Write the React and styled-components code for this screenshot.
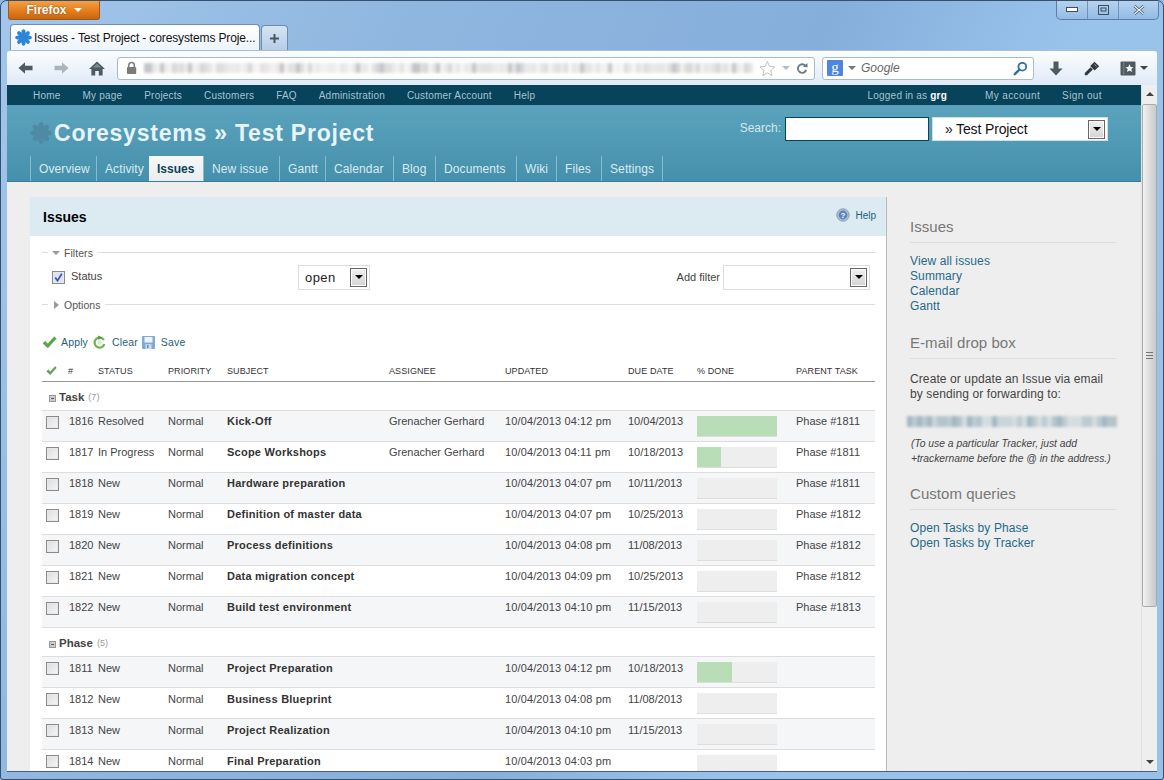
import React from "react";
import styled, { createGlobalStyle } from "styled-components";

const Global = createGlobalStyle`
  html, body { margin: 0; padding: 0; background: #8fb8e3; }
  * { box-sizing: border-box; }
  body { font-family: "Liberation Sans", Arial, sans-serif; overflow: hidden; }
`;

const Window = styled.div`
  width: 1164px; height: 780px; overflow: hidden; display: flex; flex-direction: column;
  border: 1px solid #34506e; border-radius: 7px 7px 3px 3px;
  background: linear-gradient(115deg, #a3c6ea 0%, #8fb6df 28%, #86aedb 55%, #9ac3ec 72%, #98c1ea 100%);
`;
const TitleBar = styled.div`
  height: 19px; flex: none; display: flex; justify-content: space-between; padding: 0 4px 0 7px; margin-top: -1px;
`;
const FirefoxButton = styled.div`
  width: 92px; height: 20px; display: flex; align-items: center; justify-content: center; gap: 7px;
  color: #fff; font-size: 12px; font-weight: bold; border: 1px solid #9c5a1c; border-top: 0; border-radius: 0 0 3px 3px;
  background: linear-gradient(#f5a54a, #e77f1d 55%, #c9650f); text-shadow: 0 0 2px #8a4a10;
`;
const Caret = styled.span`
  width: 0; height: 0; border-left: 4px solid transparent; border-right: 4px solid transparent;
  border-top: 4px solid ${p => p.$color || "#fff"}; display: inline-block;
`;
const CaretUp = styled(Caret)`
  border-top: 0; border-bottom: 4px solid ${p => p.$color || "#fff"};
`;
const WinControls = styled.div`
  display: flex; width: 103px; height: 20px; border: 1px solid #5a7ea6; border-top: 0; border-radius: 0 0 5px 5px;
  background: linear-gradient(#b9d3ee, #93bbe5);
`;
const WinBtn = styled.div`
  flex: ${p => p.$grow || 1}; display: flex; align-items: center; justify-content: center;
  & + & { border-left: 1px solid #6f93bb; }
`;
const TabRow = styled.div`
  height: 31px; flex: none; display: flex; align-items: flex-end; padding: 0 0 0 9px; gap: 1px;
`;
const Tab = styled.div`
  width: 250px; height: 26px; display: flex; align-items: center; gap: 2px; padding: 0 0 0 4px; font-size: 12px; letter-spacing: -.13px; color: #111;
  background: linear-gradient(#fff, #eef4fb); border: 1px solid #6d8cae; border-bottom: 0; border-radius: 4px 4px 0 0; white-space: nowrap;
`;
const NewTab = styled.div`
  width: 27px; height: 25px; display: flex; align-items: center; justify-content: center;
  background: linear-gradient(#d5e4f4, #b6cde6); border: 1px solid #6d8cae; border-bottom: 0; border-radius: 4px 4px 0 0;
`;
const NavShell = styled.div`
  flex: 1; min-height: 0; margin: 0 6px 7px 6px; display: flex; flex-direction: column;
  border-bottom: 1px solid #46607c;
`;
const NavBar = styled.div`
  height: 35px; flex: none; display: flex; align-items: center;
  background: linear-gradient(#fbfdff, #dfeaf6); border-radius: 3px 3px 0 0; border-top: 1px solid #a9bfd6;
`;
const NavIcon = styled.div`
  width: ${p => p.$w || 36}px; display: flex; justify-content: center; align-items: center; flex: none;
`;
const UrlBar = styled.div`
  width: 698px; height: 23px; flex: none; margin: 0 7px 0 1px; display: flex; align-items: center; padding: 0 6px 0 8px;
  background: #fff; border: 1px solid #a9bacb; border-radius: 3px;
`;
const Mosaic = styled.div`
  height: ${p => p.$h}px; width: ${p => p.$w}px; flex: none; filter: blur(1.4px); margin: ${p => p.$m || 0};
`;
const SearchBar = styled.div`
  width: 212px; height: 23px; flex: none; display: flex; align-items: center; padding: 0 5px 0 4px; gap: 5px;
  background: #fff; border: 1px solid #a9bacb; border-radius: 3px;
`;
const GBox = styled.div`
  width: 16px; height: 16px; background: #4d86dc; color: #fff; border-radius: 1px; font: 15px/15px "Liberation Serif", serif; text-align: center;
`;
const GoogleText = styled.span`
  flex: 1; font: italic 12px "Liberation Sans", sans-serif; color: #666; margin-left: 0;
`;
const Body = styled.div`
  flex: 1; min-height: 0; display: flex;
`;
const Page = styled.div`
  flex: 1; min-width: 0; overflow: hidden; background: #eee;
`;
const TopMenu = styled.div`
  height: 21px; display: flex; align-items: center; background: #07435a; padding: 0 39px 0 26px; font-size: 10px; letter-spacing: .2px; color: #a5c3ce;
  border-bottom: 1px solid #5d9db3;
`;
const TopLink = styled.span` margin-right: 22px; `;
const TopRight = styled.div`
  margin-left: auto; display: flex; gap: 22px; letter-spacing: .4px;
  & b { color: #fff; }
`;
const LoggedIn = styled.span` margin-right: 16px; letter-spacing: .2px; `;
const Header = styled.div`
  height: 76px; background: linear-gradient(#5ba3bd, #4590ac); border-bottom: 1px solid #3b7d96; display: flex; flex-direction: column; padding: 0 33px 0 23px;
`;
const HeaderTop = styled.div`
  flex: 1; display: flex; justify-content: space-between; align-items: flex-start; padding-top: 11px;
`;
const Title = styled.h1`
  margin: 1px 0 0; display: flex; align-items: center; gap: 2px; font-size: 23px; line-height: 30px; letter-spacing: .78px; font-weight: bold; color: #e8f4f8; white-space: nowrap;
`;
const QuickSearch = styled.div`
  display: flex; align-items: flex-start; gap: 4px; font-size: 12px; color: #d3e8ef;
`;
const SearchLabel = styled.span` line-height: 22px; `;
const SearchInput = styled.div`
  width: 144px; height: 24px; background: #fff; border: 1px solid #07435a;
`;
const ProjectSelect = styled.div`
  width: 176px; height: 24px; margin-left: -1px; background: #fff; border: 1px solid #cfe0e8; display: flex; align-items: center; justify-content: space-between;
  padding: 0 2px 0 12px; font-size: 14px; letter-spacing: -.15px; color: #111;
`;
const Tabs = styled.div`
  display: flex; height: 25px; flex: none;
`;
const TabItem = styled.div`
  display: flex; align-items: center; width: ${p => p.$w}px; font-size: 12px; letter-spacing: ${p => p.$active ? 0 : ".1px"}; font-weight: ${p => p.$active ? "bold" : "normal"};
  padding-left: ${p => p.$active ? 7 : 8}px; white-space: nowrap;
  color: ${p => p.$active ? "#0c4258" : "#d9ebf1"};
  border-left: 1px solid ${p => p.$active ? "transparent" : "#88bbcd"};
  background: ${p => p.$active ? "linear-gradient(#f6f9fa, #e9eded)" : "transparent"};
`;
const Main = styled.div`
  display: flex; padding: 15px 0 0 23px; height: 700px;
`;
const Content = styled.div`
  width: 857px; flex: none; background: #fff; border-right: 1px solid #bbb;
`;
const ContentHead = styled.div`
  height: 39px; background: #dceaf1; display: flex; align-items: center; justify-content: space-between; padding: 0 10px 0 13px;
`;
const PageTitle = styled.h2`
  margin: 0; font-size: 14px; font-weight: bold; color: #000;
`;
const HelpLink = styled.span`
  display: flex; align-items: center; gap: 5px; font-size: 10px; color: #1f5f7a; margin-top: -3px;
`;
const Inner = styled.div` padding: 0 11px 0 12px; `;
const Legend = styled.div`
  display: flex; align-items: center; gap: 4px; height: 13px; font-size: 10.5px; color: #555; letter-spacing: .05px; margin-top: ${p => p.$mt || 0}px;
  &::before { content: ""; width: 6px; height: 1px; background: #ddd; }
  &::after { content: ""; flex: 1; height: 1px; background: #ddd; }
`;
const FilterRow = styled.div`
  height: 26px; margin-top: 5px; display: flex; align-items: center; padding: 0 5px 0 10px; font-size: 11px; color: #444;
`;
const StatusLabel = styled.span` width: 227px; margin: -2px 0 0 6px; `;
const SelectBox = styled.div`
  width: ${p => p.$w}px; height: 25px; background: #fff; border: 1px solid #ddd; display: flex; align-items: center; justify-content: space-between;
  padding: 0 2px 0 6px; font-size: 13px; letter-spacing: .4px; color: #222;
`;
const AddFilter = styled.span` margin: 0 3px 0 auto; `;
const DropBtn = styled.div`
  width: 17px; height: 19px; margin-left: auto; background: linear-gradient(#f0f0f0, #d4d4d4); border: 1px solid #666; display: flex; align-items: center; justify-content: center; box-shadow: inset 0 0 0 1px #fff;
`;
const Check = styled.div`
  width: 13px; height: 13px; flex: none; border: 1px solid #8a8a8a; background: ${p => p.$on ? "#dde3f2" : "linear-gradient(135deg,#ddd,#f6f6f6)"}; box-shadow: inset 0 0 0 1px #e8e8e8;
  display: flex; align-items: center; justify-content: center;
`;
const Actions = styled.div`
  display: flex; align-items: center; height: 18px; margin-top: 22px; font-size: 10.5px; letter-spacing: .15px; color: #1f5f7a;
`;
const ActionLink = styled.span`
  display: flex; align-items: center; gap: ${p => p.$gap || 4}px; margin-right: ${p => p.$mr || 5}px;
`;
const GridRow = styled.div`
  display: grid; grid-template-columns: 26px 30px 70px 59px 162px 116px 123px 69px 99px 79px;
`;
const HeadRow = styled(GridRow)`
  height: 20px; margin-top: 11px; align-items: center; font-size: 9px; letter-spacing: .1px; color: #333; border-bottom: 1px solid #999; padding-bottom: 1px;
`;
const HeadCheck = styled.div` padding-left: 4px; display: flex; `;
const Group = styled.div`
  height: 29px; display: flex; align-items: center; gap: 3px; padding: 2px 0 0 7px; border-bottom: 1px solid #ddd; font-size: 11.5px; font-weight: bold; color: #444;
  & em { font-style: normal; font-weight: normal; font-size: 9px; color: #999; margin-left: 1px; }
`;
const Toggle = styled.span`
  width: 7px; height: 7px; background: #ccc; border: 1px solid #999; margin-top: 3px; display: flex; align-items: center; justify-content: center;
  &::after { content: ""; width: 3px; height: 1px; background: #555; }
`;
const Row = styled(GridRow)`
  height: 31px; background: ${p => p.$odd ? "#f5f6f8" : "#fff"}; border-bottom: 1px solid #ddd; font-size: 11px; line-height: 13px; color: #444; padding-top: ${p => p.$low ? 5 : 4}px; white-space: nowrap;
`;
const CheckCell = styled.div` padding: ${p => p.$low ? 0 : 1}px 0 0 4px; `;
const IdCell = styled.div` padding-left: 1px; `;
const Subject = styled.div` font-weight: bold; color: #333; font-size: 11px; letter-spacing: .24px; `;
const UpdatedCell = styled.div` letter-spacing: .12px; `;
const DoneCell = styled.div` padding-top: ${p => p.$low ? 0 : 1}px; `;
const Bar = styled.div`
  width: 80px; height: 21px; background: #eee; border-bottom: 1px solid #ddd;
`;
const BarFill = styled.div`
  height: 20px; background: #b9ddb6;
`;
const Sidebar = styled.div`
  width: 206px; flex: none; margin-left: 23px; padding-top: 19px; font-size: 12px; color: #444;
`;
const SideTitle = styled.h3`
  margin: ${p => p.$mt || 0}px 0 11px; font-size: 15px; font-weight: normal; color: #777; line-height: 22px; padding-bottom: 4px; border-bottom: 1px solid #ddd; letter-spacing: .05px;
`;
const SideLink = styled.div`
  color: #1f6a8a; line-height: 15px; letter-spacing: .1px; font-size: 12px;
`;
const SideText = styled.div`
  font-size: 12px; line-height: 15px; letter-spacing: .1px; color: #444; padding-top: 2px; white-space: nowrap;
`;
const SideNote = styled.div`
  font-size: 10.3px; line-height: 15px; font-style: italic; color: #444; white-space: nowrap; margin-left: 1px;
`;
const Scrollbar = styled.div`
  width: 16px; flex: none; background: #eee; display: flex; flex-direction: column; align-items: stretch; border-left: 1px solid #e2e2e2;
`;
const ScrollBtn = styled.div`
  height: 18px; flex: none; display: flex; align-items: center; justify-content: center;
`;
const ScrollThumb = styled.div`
  height: 503px; flex: none; margin: 1px 0 0 0; border: 1px solid #aaa; border-radius: 2px; background: linear-gradient(90deg, #f2f2f2, #dcdcdc 50%, #c9c9cd); display: flex; align-items: center; justify-content: center;
`;
const ScrollGap = styled.div` flex: 1; `;
const Grip = styled.div`
  width: 7px; height: 7px; border-top: 1px solid #777; border-bottom: 1px solid #777; background: linear-gradient(#fff0 2px, #777 2px, #777 3px, #fff0 3px);
`;

/* Icons */
const Logo = ({ size, color }) => (
  <svg width={size} height={size} viewBox="0 0 24 24">
    {[0, 45, 90, 135, 180, 225, 270, 315].map(a => (
      <ellipse key={a} cx="12" cy="5.2" rx="2.9" ry="4.9" fill={color} transform={`rotate(${a} 12 12)`} />
    ))}
    <circle cx="12" cy="12" r="3" fill={color} />
  </svg>
);
const Arrow = ({ color, flip }) => (
  <svg width="15" height="14" viewBox="0 0 16 14" style={flip ? { transform: "scaleX(-1)" } : undefined}>
    <path d="M0.5 7 L7.5 0.8 L7.5 4.6 L15.5 4.6 L15.5 9.4 L7.5 9.4 L7.5 13.2 Z" fill={color} />
  </svg>
);
const Home = () => (
  <svg width="16" height="15" viewBox="0 0 16 15">
    <path d="M8 0.5 L16 8 L13.6 8 L13.6 14.5 L9.8 14.5 L9.8 10 L6.2 10 L6.2 14.5 L2.4 14.5 L2.4 8 L0 8 Z" fill="#4e5a62" />
    <path d="M8 2.6 L3.8 6.6 L12.2 6.6 Z" fill="#7c8a93" />
  </svg>
);
const Lock = () => (
  <svg width="12" height="14" viewBox="0 0 12 14">
    <path d="M3 6 V4.2 a3 3 0 0 1 6 0 V6" fill="none" stroke="#7b7b7b" strokeWidth="1.6" />
    <rect x="1" y="6" width="10" height="7.5" rx="1" fill="#7b7b7b" />
  </svg>
);
const Star = () => (
  <svg width="18" height="17" viewBox="0 0 18 17">
    <path d="M9 1 L11.3 6.3 L17 6.8 L12.7 10.6 L14 16 L9 13.2 L4 16 L5.3 10.6 L1 6.8 L6.7 6.3 Z" fill="#fff" stroke="#b5bdc6" />
  </svg>
);
const Reload = () => (
  <svg width="13" height="13" viewBox="0 0 13 13">
    <path d="M10.5 4 A4.6 4.6 0 1 0 11 8" fill="none" stroke="#6b7a88" strokeWidth="2" />
    <path d="M7.5 4.8 L12.5 5.2 L12.2 0.5 Z" fill="#6b7a88" />
  </svg>
);
const Magnifier = () => (
  <svg width="15" height="15" viewBox="0 0 15 15">
    <circle cx="9.3" cy="5.7" r="3.9" fill="none" stroke="#2f6ea8" strokeWidth="1.8" />
    <path d="M6.5 8.5 L1.8 13.2" stroke="#2f6ea8" strokeWidth="2.4" strokeLinecap="round" />
  </svg>
);
const Download = () => (
  <svg width="14" height="15" viewBox="0 0 14 15">
    <path d="M4.5 0.5 H9.5 V7.5 H13.5 L7 14.5 L0.5 7.5 H4.5 Z" fill="#4e5a62" />
  </svg>
);
const Key = () => (
  <svg width="16" height="15" viewBox="0 0 16 15">
    <path d="M0.8 14.2 L0.8 12 L6.6 6.2 L8.8 8.4 L3 14.2 Z" fill="#33393e" />
    <path d="M6.2 5 L10.5 0.8 L15.2 5.2 L10.6 9.4 Z" fill="#33393e" />
    <path d="M10.4 3.2 L12.6 5.3" stroke="#aab" strokeWidth="1" />
  </svg>
);
const Bookmarks = () => (
  <svg width="16" height="15" viewBox="0 0 16 15">
    <rect x="0.5" y="0.5" width="15" height="14" rx="1" fill="#4e5a62" />
    <path d="M3.8 0.5 V14.5" stroke="#79858d" strokeWidth="1" />
    <path d="M9.5 3 L10.7 6 L13.5 6.2 L11.3 8 L12 11 L9.5 9.4 L7 11 L7.7 8 L5.5 6.2 L8.3 6 Z" fill="#fff" />
  </svg>
);
const Plus = () => (
  <svg width="11" height="11" viewBox="0 0 11 11"><path d="M5.5 1 V10 M1 5.5 H10" stroke="#4b5560" strokeWidth="2" /></svg>
);
const Tick = ({ size = 15 }) => (
  <svg width={size} height={size * 0.85} viewBox="0 0 15 13">
    <path d="M0.8 7.5 L3 5.3 L5.8 8 L12.4 0.8 L14.4 2.6 L5.8 12.2 Z" fill="#58a64c" stroke="#3e8a37" strokeWidth=".4" />
  </svg>
);
const ClearIcon = () => (
  <svg width="13" height="14" viewBox="0 0 13 14">
    <path d="M10.9 5 A5 5 0 1 0 11.4 9" fill="none" stroke="#6fb04f" strokeWidth="2.2" />
    <circle cx="6.5" cy="7.5" r="2.2" fill="#dcecd0" />
    <path d="M5 0.5 L9 2.5 L5.5 5 Z" fill="#4f9a3a" />
  </svg>
);
const SaveIcon = () => (
  <svg width="13" height="13" viewBox="0 0 13 13">
    <rect width="13" height="13" rx="1" fill="#7eaad8" />
    <rect x="2.5" y="1" width="8" height="5.5" fill="#eef4fb" />
    <rect x="3.5" y="8.2" width="6" height="4.8" fill="#d3dde8" />
    <rect x="5" y="9" width="1.5" height="3" fill="#5f86b3" />
  </svg>
);
const HelpIcon = () => (
  <svg width="14" height="14" viewBox="0 0 14 14">
    <circle cx="7" cy="7" r="6.2" fill="#a9c3de" stroke="#8d9db0" />
    <circle cx="7" cy="7" r="4.4" fill="#5a86b8" />
    <text x="7" y="9.8" textAnchor="middle" fontSize="8" fontWeight="bold" fill="#fff" fontFamily="Liberation Sans">?</text>
  </svg>
);
const CheckMark = () => (
  <svg width="9" height="9" viewBox="0 0 9 9"><path d="M1.2 4.4 L3.5 7.6 L7.8 0.8" fill="none" stroke="#3a58a8" strokeWidth="1.7" /></svg>
);

function mosaicBg(seed, width, palette, block) {
  let s = seed; const stops = [];
  for (let x = 0; x < width; x += block) {
    s = (s * 9301 + 49297) % 233280;
    const c = palette[Math.floor((s / 233280) * palette.length)];
    stops.push(`${c} ${x}px ${x + block}px`);
  }
  return `linear-gradient(90deg, ${stops.join(",")})`;
}

const groups = [
  { name: "Task", count: 7, low: false, rows: [
    [1816, "Resolved", "Kick-Off", "Grenacher Gerhard", "04:12", "10/04/2013", 100, "Phase #1811"],
    [1817, "In Progress", "Scope Workshops", "Grenacher Gerhard", "04:11", "10/18/2013", 30, "Phase #1811"],
    [1818, "New", "Hardware preparation", "", "04:07", "10/11/2013", 0, "Phase #1811"],
    [1819, "New", "Definition of master data", "", "04:07", "10/25/2013", 0, "Phase #1812"],
    [1820, "New", "Process definitions", "", "04:08", "11/08/2013", 0, "Phase #1812"],
    [1821, "New", "Data migration concept", "", "04:09", "10/25/2013", 0, "Phase #1812"],
    [1822, "New", "Build test environment", "", "04:10", "11/15/2013", 0, "Phase #1813"],
  ]},
  { name: "Phase", count: 5, low: true, rows: [
    [1811, "New", "Project Preparation", "", "04:12", "10/18/2013", 44, ""],
    [1812, "New", "Business Blueprint", "", "04:08", "11/08/2013", 0, ""],
    [1813, "New", "Project Realization", "", "04:10", "11/15/2013", 0, ""],
    [1814, "New", "Final Preparation", "", "04:03", "", 0, ""],
  ]},
];

const menu = ["Home", "My page", "Projects", "Customers", "FAQ", "Administration", "Customer Account", "Help"];
const tabs = [["Overview", 66], ["Activity", 53], ["Issues", 54, true], ["New issue", 76], ["Gantt", 46], ["Calendar", 68], ["Blog", 42], ["Documents", 81], ["Wiki", 40], ["Files", 45], ["Settings", 61], ["", 1]];
const urlPalette = ["#e6e6e6", "#ececec", "#dedede", "#f2f2f2", "#d4d6d9", "#e2e2e2", "#f6f6f6", "#eaeaea", "#c2c5c9"];
const mailPalette = ["#b5c4cc", "#c9d5db", "#a3b7c2", "#d4dde1", "#bccad1"];

export default function App() {
  return (
    <Window>
      <Global />
      <TitleBar>
        <FirefoxButton>Firefox <Caret /></FirefoxButton>
        <WinControls>
          <WinBtn><svg width="12" height="5"><rect x=".5" y=".5" width="11" height="4" fill="#fff" stroke="#3c4f63" /></svg></WinBtn>
          <WinBtn><svg width="11" height="10"><rect x=".5" y=".5" width="10" height="9" fill="none" stroke="#3c4f63" /><rect x="3" y="3" width="5" height="3" fill="none" stroke="#3c4f63" /></svg></WinBtn>
          <WinBtn $grow={1.3}><svg width="12" height="10"><path d="M1.5 1 L10.5 9 M10.5 1 L1.5 9" stroke="#3c4f63" strokeWidth="2.6" /><path d="M1.5 1 L10.5 9 M10.5 1 L1.5 9" stroke="#f2f6fa" strokeWidth="1.2" /></svg></WinBtn>
        </WinControls>
      </TitleBar>
      <TabRow>
        <Tab><Logo size={17} color="#2a86d8" />Issues - Test Project - coresystems Proje...</Tab>
        <NewTab><Plus /></NewTab>
      </TabRow>
      <NavShell>
        <NavBar>
          <NavIcon $w={37}><Arrow color="#4e5a62" /></NavIcon>
          <NavIcon $w={34}><Arrow color="#aab4bc" flip /></NavIcon>
          <NavIcon $w={38}><Home /></NavIcon>
          <UrlBar>
            <Lock />
            <Mosaic $w={610} $h={10} $m="0 5px 0 7px" style={{ background: mosaicBg(17, 610, urlPalette, 4) }} />
            <Star />
            <NavIcon $w={20}><Caret $color="#b4bcc4" /></NavIcon>
            <Reload />
          </UrlBar>
          <SearchBar>
            <GBox>g</GBox>
            <Caret $color="#777" />
            <GoogleText>Google</GoogleText>
            <Magnifier />
          </SearchBar>
          <NavIcon $w={44}><Download /></NavIcon>
          <NavIcon $w={28}><Key /></NavIcon>
          <NavIcon $w={56}>
            <Bookmarks />&nbsp;<Caret $color="#444" />
          </NavIcon>
        </NavBar>
        <Body>
          <Page>
            <TopMenu>
              {menu.map(m => <TopLink key={m}>{m}</TopLink>)}
              <TopRight>
                <LoggedIn>Logged in as <b>grg</b></LoggedIn>
                <span>My account</span>
                <span>Sign out</span>
              </TopRight>
            </TopMenu>
            <Header>
              <HeaderTop>
                <Title><Logo size={22} color="#4f8aa4" />Coresystems » Test Project</Title>
                <QuickSearch>
                  <SearchLabel>Search:</SearchLabel>
                  <SearchInput />
                  <ProjectSelect>» Test Project<DropBtn><Caret $color="#000" /></DropBtn></ProjectSelect>
                </QuickSearch>
              </HeaderTop>
              <Tabs>
                {tabs.map(([t, w, a]) => <TabItem key={t || "end"} $w={w} $active={a}>{t}</TabItem>)}
              </Tabs>
            </Header>
            <Main>
              <Content>
                <ContentHead>
                  <PageTitle>Issues</PageTitle>
                  <HelpLink><HelpIcon />Help</HelpLink>
                </ContentHead>
                <Inner>
                  <Legend $mt={10}><Caret $color="#999" />Filters</Legend>
                  <FilterRow>
                    <Check $on><CheckMark /></Check>
                    <StatusLabel>Status</StatusLabel>
                    <SelectBox $w={72}>open<DropBtn><Caret $color="#000" /></DropBtn></SelectBox>
                    <AddFilter>Add filter</AddFilter>
                    <SelectBox $w={147}><DropBtn><Caret $color="#000" /></DropBtn></SelectBox>
                  </FilterRow>
                  <Legend $mt={8}><svg width="8" height="8"><path d="M2 0 L7 4 L2 8 Z" fill="#999" /></svg>Options</Legend>
                  <Actions>
                    <ActionLink><Tick />Apply</ActionLink>
                    <ActionLink $gap={6} $mr={4}><ClearIcon />Clear</ActionLink>
                    <ActionLink $gap={6}><SaveIcon />Save</ActionLink>
                  </Actions>
                  <HeadRow>
                    <HeadCheck><Tick size={11} /></HeadCheck>
                    <span>#</span><span>STATUS</span><span>PRIORITY</span><span>SUBJECT</span><span>ASSIGNEE</span>
                    <span>UPDATED</span><span>DUE DATE</span><span>% DONE</span><span>PARENT TASK</span>
                  </HeadRow>
                  {groups.map(g => (
                    <React.Fragment key={g.name}>
                      <Group><Toggle />{g.name} <em>({g.count})</em></Group>
                      {g.rows.map((r, i) => (
                        <Row key={r[0]} $odd={i % 2 === 0} $low={g.low}>
                          <CheckCell $low={g.low}><Check /></CheckCell>
                          <IdCell>{r[0]}</IdCell>
                          <div>{r[1]}</div>
                          <div>Normal</div>
                          <Subject>{r[2]}</Subject>
                          <div>{r[3]}</div>
                          <UpdatedCell>10/04/2013 {r[4]} pm</UpdatedCell>
                          <div>{r[5]}</div>
                          <DoneCell $low={g.low}><Bar><BarFill style={{ width: `${r[6]}%` }} /></Bar></DoneCell>
                          <div>{r[7]}</div>
                        </Row>
                      ))}
                    </React.Fragment>
                  ))}
                </Inner>
              </Content>
              <Sidebar>
                <SideTitle>Issues</SideTitle>
                <SideLink>View all issues</SideLink>
                <SideLink>Summary</SideLink>
                <SideLink>Calendar</SideLink>
                <SideLink>Gantt</SideLink>
                <SideTitle $mt={18}>E-mail drop box</SideTitle>
                <SideText>Create or update an Issue via email<br />by sending or forwarding to:</SideText>
                <Mosaic $w={210} $h={11} $m="14px 0 9px -3px" style={{ background: mosaicBg(5, 210, mailPalette, 5) }} />
                <SideNote>(To use a particular Tracker, just add<br />+trackername before the @ in the address.)</SideNote>
                <SideTitle $mt={17}>Custom queries</SideTitle>
                <SideLink>Open Tasks by Phase</SideLink>
                <SideLink>Open Tasks by Tracker</SideLink>
              </Sidebar>
            </Main>
          </Page>
          <Scrollbar>
            <ScrollBtn><CaretUp $color="#444" /></ScrollBtn>
            <ScrollThumb><Grip /></ScrollThumb>
            <ScrollGap />
            <ScrollBtn><Caret $color="#444" /></ScrollBtn>
          </Scrollbar>
        </Body>
      </NavShell>
    </Window>
  );
}
